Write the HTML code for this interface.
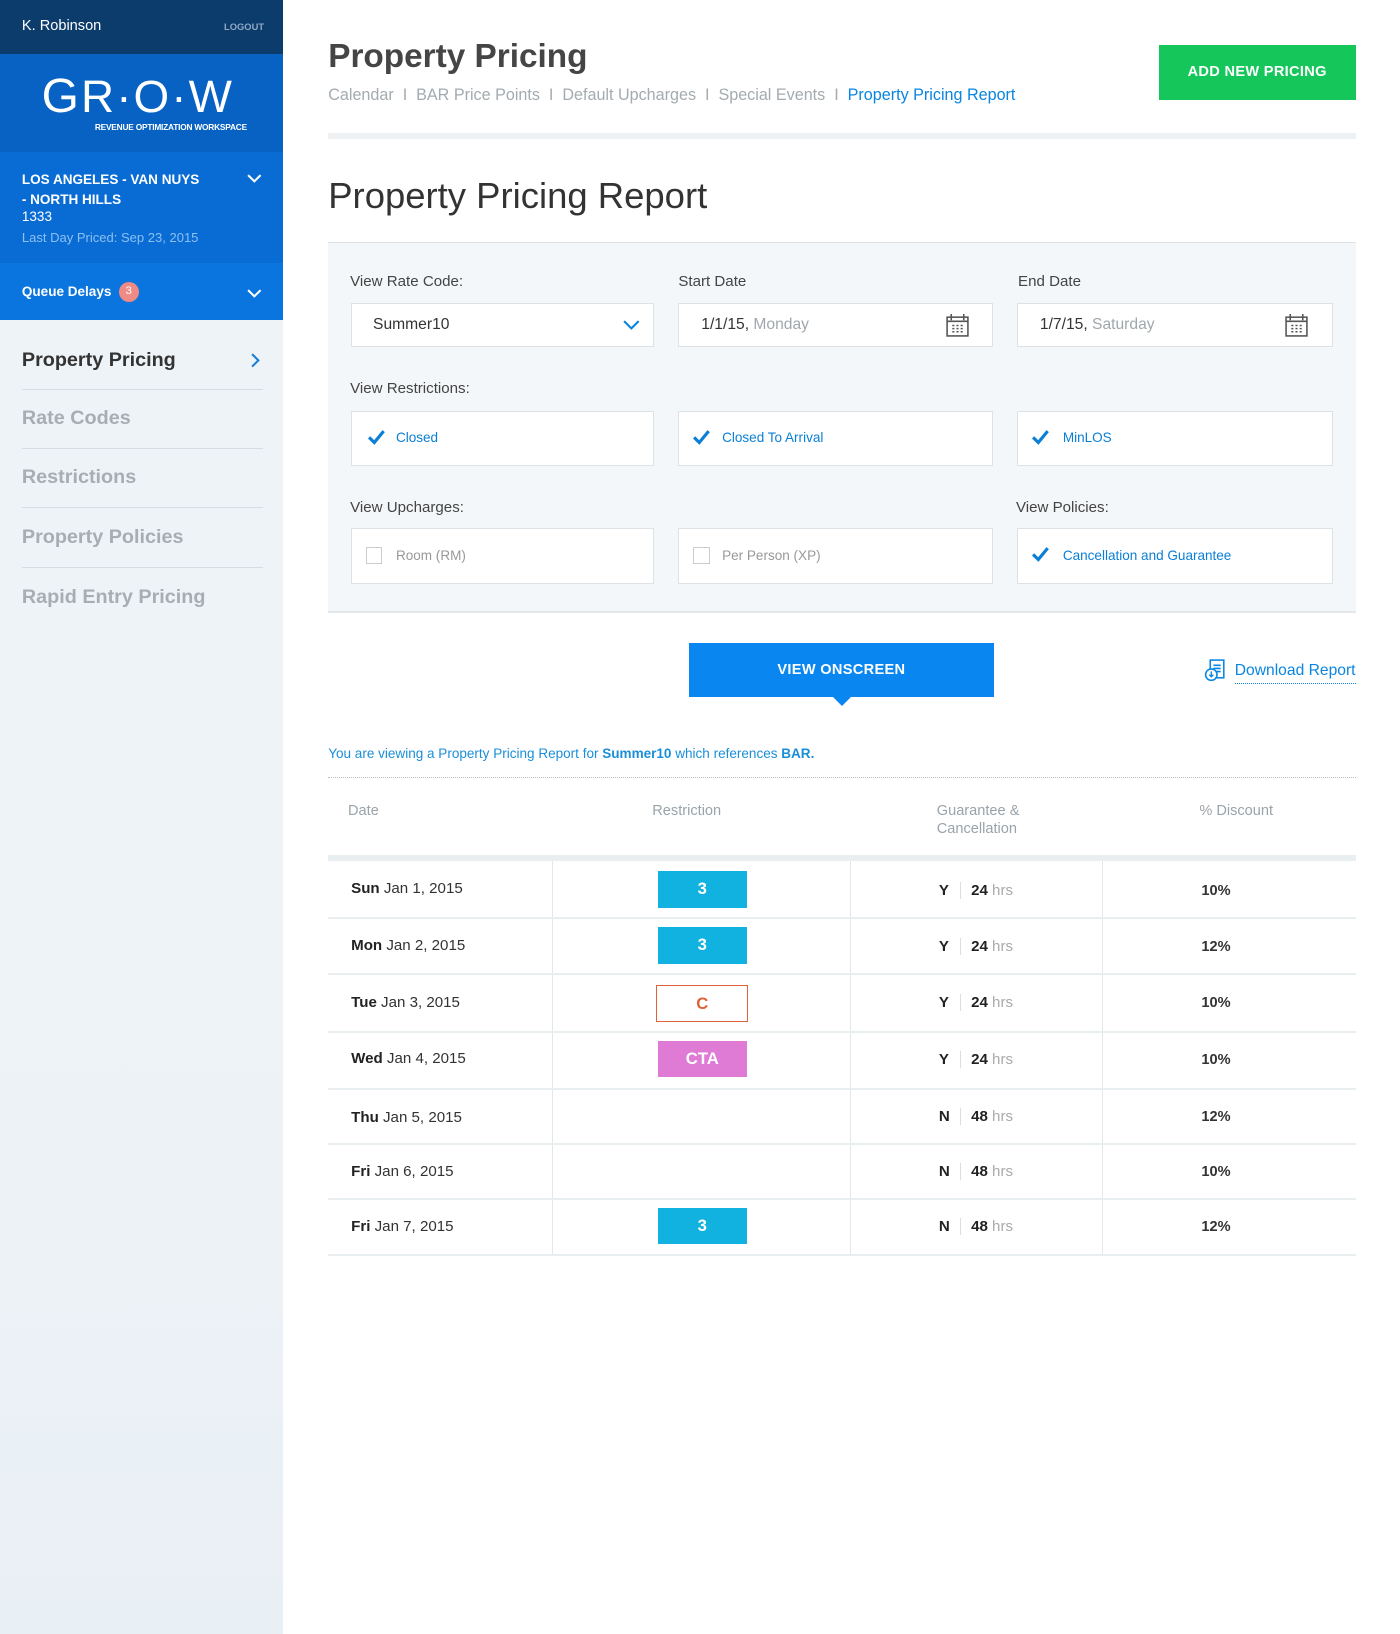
<!DOCTYPE html>
<html><head><meta charset="utf-8">
<style>
html,body{margin:0;padding:0;background:#fff;overflow:hidden}
body{width:1400px;height:1634px}
#w{zoom:1.042;position:relative;width:1344px;height:1568px;font-family:"Liberation Sans",sans-serif;color:#333}
.a{position:absolute;white-space:nowrap}
#sb{position:absolute;left:0;top:0;width:272px;height:1568px;background:linear-gradient(#eef3f7,#eef3f7 60%,#e9f0f5)}
.nav{position:absolute;left:21px;font-size:19px;font-weight:bold;color:#a6adb3}
.sep{position:absolute;left:21px;width:231px;height:1px;background:#d6dde2}
.lbl{position:absolute;font-size:14.5px;color:#444}
.box{position:absolute;background:#fff;border:1px solid #dde2e6;box-sizing:border-box}
.chk{position:absolute;font-size:13px;color:#0a7fd6}
.th{position:absolute;font-size:14px;color:#9aa3a9;top:771px}
.row{position:absolute;left:315px;width:986px;height:2px;background:#e9eef1}
.vl{position:absolute;width:1px;background:#e2e7ea;top:826px;height:378px}
.d{position:absolute;left:337px;font-size:14.5px;color:#333}
.d b{color:#222}
.bd{position:absolute;left:631px;width:86px;height:35px;line-height:35px;text-align:center;color:#fff;font-weight:bold;font-size:16px}
.g{position:absolute;left:901px;font-size:14.5px;color:#222}
.g b{display:inline-block;width:20px}
.g i{font-style:normal;display:inline-block;border-left:1px solid #ddd;padding-left:10px;font-weight:bold}
.g span{color:#aaa;font-weight:normal}
.p{position:absolute;left:1153px;font-size:14px;font-weight:bold;color:#333}
</style></head><body><div id="w">
<div id="sb">
 <div style="position:absolute;left:0;top:0;width:272px;height:52px;background:#0c3c6c"></div>
 <div class="a" style="left:21px;top:17px;font-size:14px;color:#fff">K. Robinson</div>
 <div class="a" style="left:215px;top:21px;font-size:9px;color:#8fa9c6;font-weight:bold">LOGOUT</div>
 <div style="position:absolute;left:0;top:52px;width:272px;height:94px;background:#0762c4"></div>
 <div class="a" style="left:40px;top:66px;font-size:46px;color:#fff;letter-spacing:2px">G<span style="font-size:44px">R·O·W</span></div>
 <div class="a" style="left:91px;top:117px;font-size:8px;color:#fff;font-weight:bold;letter-spacing:-.2px">REVENUE OPTIMIZATION WORKSPACE</div>
 <div style="position:absolute;left:0;top:146px;width:272px;height:106px;background:#096cd4"></div>
 <div class="a" style="left:21px;top:163px;font-size:13px;color:#fff;font-weight:bold;line-height:19px">LOS ANGELES - VAN NUYS<br>- NORTH HILLS</div>
 <div class="a" style="left:21px;top:201px;font-size:13px;color:#fff">1333</div>
 <div class="a" style="left:21px;top:221px;font-size:12.5px;color:#8cc0f2">Last Day Priced: Sep 23, 2015</div>
 <svg class="a" style="left:236px;top:166px" width="16" height="10"><path d="M2 2l6 6 6-6" stroke="#fff" stroke-width="2" fill="none"/></svg>
 <div style="position:absolute;left:0;top:252px;width:272px;height:55px;background:#0a74df"></div>
 <div class="a" style="left:21px;top:273px;font-size:13px;color:#fff;font-weight:bold">Queue Delays</div>
 <div class="a" style="left:114px;top:271px;width:19px;height:19px;border-radius:10px;background:#f08a84;color:#fff;font-size:11px;text-align:center;line-height:19px">3</div>
 <svg class="a" style="left:236px;top:276px" width="16" height="10"><path d="M2 2l6 6 6-6" stroke="#fff" stroke-width="2" fill="none"/></svg>
 <div class="nav" style="top:335px;color:#333">Property Pricing</div>
 <svg class="a" style="left:240px;top:338px" width="10" height="16"><path d="M2 2l6 6-6 6" stroke="#1a7fd6" stroke-width="2" fill="none"/></svg>
 <div class="sep" style="top:373px"></div>
 <div class="nav" style="top:391px">Rate Codes</div>
 <div class="sep" style="top:430px"></div>
 <div class="nav" style="top:447px">Restrictions</div>
 <div class="sep" style="top:487px"></div>
 <div class="nav" style="top:505px">Property Policies</div>
 <div class="sep" style="top:544px"></div>
 <div class="nav" style="top:562px">Rapid Entry Pricing</div>
</div>

<div class="a" style="left:315px;top:36px;font-size:32px;font-weight:bold;color:#454545">Property Pricing</div>
<div class="a" style="left:315px;top:83px;font-size:15.5px;color:#a3abb0">Calendar &nbsp;I&nbsp; BAR Price Points &nbsp;I&nbsp; Default Upcharges &nbsp;I&nbsp; Special Events &nbsp;I&nbsp; <span style="color:#0a86e0">Property Pricing Report</span></div>
<div class="a" style="left:1112px;top:43px;width:189px;height:53px;background:#15c75a;color:#fff;font-weight:bold;font-size:14px;text-align:center;line-height:53px;letter-spacing:.3px">ADD NEW PRICING</div>
<div class="a" style="left:315px;top:128px;width:986px;height:5px;background:#eef1f3"></div>
<div class="a" style="left:315px;top:168px;font-size:35px;color:#333">Property Pricing Report</div>

<div class="a" style="left:315px;top:232px;width:986px;height:356px;background:#f4f7f9;border-top:1px solid #dde2e6;border-bottom:2px solid #e3e8eb;box-sizing:border-box"></div>
<div class="lbl" style="left:336px;top:262px">View Rate Code:</div>
<div class="lbl" style="left:651px;top:262px">Start Date</div>
<div class="lbl" style="left:977px;top:262px">End Date</div>
<div class="box" style="left:337px;top:291px;width:291px;height:42px"></div>
<div class="a" style="left:358px;top:303px;font-size:15px;color:#333">Summer10</div>
<svg class="a" style="left:597px;top:306px" width="18" height="12"><path d="M2 2l7 7 7-7" stroke="#0a86e0" stroke-width="2" fill="none"/></svg>
<div class="box" style="left:651px;top:291px;width:302px;height:42px"></div>
<div class="a" style="left:673px;top:303px;font-size:15px;color:#333">1/1/15, <span style="color:#a0a7ac">Monday</span></div>
<div class="box" style="left:976px;top:291px;width:303px;height:42px"></div>
<div class="a" style="left:998px;top:303px;font-size:15px;color:#333">1/7/15, <span style="color:#a0a7ac">Saturday</span></div>
<svg class="a" style="left:907px;top:300px" width="24" height="24"><rect x="2" y="4" width="20" height="18" fill="none" stroke="#555" stroke-width="1.5"/><path d="M6 1v6M18 1v6M2 8h20" stroke="#555" stroke-width="1.5"/><path d="M7 12h2M11 12h2M15 12h2M7 15h2M11 15h2M15 15h2M7 18h2M11 18h2M15 18h2" stroke="#555" stroke-width="1.5"/></svg>
<svg class="a" style="left:1232px;top:300px" width="24" height="24"><rect x="2" y="4" width="20" height="18" fill="none" stroke="#555" stroke-width="1.5"/><path d="M6 1v6M18 1v6M2 8h20" stroke="#555" stroke-width="1.5"/><path d="M7 12h2M11 12h2M15 12h2M7 15h2M11 15h2M15 15h2M7 18h2M11 18h2M15 18h2" stroke="#555" stroke-width="1.5"/></svg>

<div class="lbl" style="left:336px;top:365px">View Restrictions:</div>
<div class="box" style="left:337px;top:394px;width:291px;height:53px"></div>
<div class="box" style="left:651px;top:394px;width:302px;height:53px"></div>
<div class="box" style="left:976px;top:394px;width:303px;height:53px"></div>
<svg class="a" style="left:352px;top:412px" width="18" height="16"><path d="M2 8l5 5 9-11" stroke="#0a7fd6" stroke-width="3" fill="none"/></svg>
<div class="chk" style="left:380px;top:413px">Closed</div>
<svg class="a" style="left:664px;top:412px" width="18" height="16"><path d="M2 8l5 5 9-11" stroke="#0a7fd6" stroke-width="3" fill="none"/></svg>
<div class="chk" style="left:693px;top:413px">Closed To Arrival</div>
<svg class="a" style="left:989px;top:412px" width="18" height="16"><path d="M2 8l5 5 9-11" stroke="#0a7fd6" stroke-width="3" fill="none"/></svg>
<div class="chk" style="left:1020px;top:413px">MinLOS</div>

<div class="lbl" style="left:336px;top:479px">View Upcharges:</div>
<div class="lbl" style="left:975px;top:479px">View Policies:</div>
<div class="box" style="left:337px;top:507px;width:291px;height:53px"></div>
<div class="box" style="left:651px;top:507px;width:302px;height:53px"></div>
<div class="box" style="left:976px;top:507px;width:303px;height:53px"></div>
<div class="a" style="left:351px;top:525px;width:14px;height:14px;border:1px solid #ccc;background:#fff"></div>
<div class="chk" style="left:380px;top:526px;color:#999">Room (RM)</div>
<div class="a" style="left:665px;top:525px;width:14px;height:14px;border:1px solid #ccc;background:#fff"></div>
<div class="chk" style="left:693px;top:526px;color:#999">Per Person (XP)</div>
<svg class="a" style="left:989px;top:524px" width="18" height="16"><path d="M2 8l5 5 9-11" stroke="#0a7fd6" stroke-width="3" fill="none"/></svg>
<div class="chk" style="left:1020px;top:526px">Cancellation and Guarantee</div>

<div class="a" style="left:661px;top:617px;width:293px;height:52px;background:#0a86f0;color:#fff;font-weight:bold;font-size:14px;text-align:center;line-height:52px;letter-spacing:.3px">VIEW ONSCREEN</div>
<div class="a" style="left:799px;top:669px;width:0;height:0;border-left:9px solid transparent;border-right:9px solid transparent;border-top:9px solid #0a86f0"></div>
<svg class="a" style="left:1155px;top:631px" width="22" height="24"><rect x="6" y="2" width="13" height="17" fill="#fff" stroke="#0a86e0" stroke-width="1.5"/><path d="M9 7h7M9 10h7M9 13h7" stroke="#0a86e0" stroke-width="1.5"/><circle cx="7" cy="16" r="5.5" fill="#fff" stroke="#0a86e0" stroke-width="1.5"/><path d="M7 13v5M5 16l2 2 2-2" stroke="#0a86e0" stroke-width="1.3" fill="none"/></svg>
<div class="a" style="left:1185px;top:635px;font-size:15px;color:#0a86e0;border-bottom:1px dotted #0a86e0;padding-bottom:3px">Download Report</div>

<div class="a" style="left:315px;top:716px;font-size:13px;color:#1a8fd9">You are viewing a Property Pricing Report for <b>Summer10</b> which references <b>BAR.</b></div>
<div class="a" style="left:315px;top:746px;width:986px;border-top:1px dotted #b8c0c5"></div>

<div class="th" style="left:334px">Date</div>
<div class="th" style="left:626px">Restriction</div>
<div class="th" style="left:899px;line-height:17px">Guarantee &amp;<br>Cancellation</div>
<div class="th" style="left:1151px">% Discount</div>
<div class="a" style="left:315px;top:821px;width:986px;height:5px;background:#e9eef1"></div>
<div class="vl" style="left:530px"></div><div class="vl" style="left:816px"></div><div class="vl" style="left:1058px"></div>
<div class="row" style="top:880px"></div><div class="row" style="top:934px"></div><div class="row" style="top:989px"></div><div class="row" style="top:1044px"></div><div class="row" style="top:1097px"></div><div class="row" style="top:1150px"></div><div class="row" style="top:1203px"></div>

<div class="d" style="top:845px"><b>Sun</b> Jan 1, 2015</div>
<div class="d" style="top:899px"><b>Mon</b> Jan 2, 2015</div>
<div class="d" style="top:954px"><b>Tue</b> Jan 3, 2015</div>
<div class="d" style="top:1008px"><b>Wed</b> Jan 4, 2015</div>
<div class="d" style="top:1064px"><b>Thu</b> Jan 5, 2015</div>
<div class="d" style="top:1116px"><b>Fri</b> Jan 6, 2015</div>
<div class="d" style="top:1169px"><b>Fri</b> Jan 7, 2015</div>

<div class="bd" style="top:836px;background:#12b2e0">3</div>
<div class="bd" style="top:890px;background:#12b2e0">3</div>
<div class="bd" style="top:945px;left:630px;width:86px;height:34px;line-height:34px;border:1.5px solid #e0623a;color:#e0623a;background:#fff">C</div>
<div class="bd" style="top:999px;background:#e07bd5">CTA</div>
<div class="bd" style="top:1159px;background:#12b2e0">3</div>

<div class="g" style="top:846px"><b>Y</b><i>24 <span>hrs</span></i></div>
<div class="g" style="top:900px"><b>Y</b><i>24 <span>hrs</span></i></div>
<div class="g" style="top:954px"><b>Y</b><i>24 <span>hrs</span></i></div>
<div class="g" style="top:1009px"><b>Y</b><i>24 <span>hrs</span></i></div>
<div class="g" style="top:1063px"><b>N</b><i>48 <span>hrs</span></i></div>
<div class="g" style="top:1116px"><b>N</b><i>48 <span>hrs</span></i></div>
<div class="g" style="top:1169px"><b>N</b><i>48 <span>hrs</span></i></div>

<div class="p" style="top:847px">10%</div>
<div class="p" style="top:901px">12%</div>
<div class="p" style="top:955px">10%</div>
<div class="p" style="top:1010px">10%</div>
<div class="p" style="top:1064px">12%</div>
<div class="p" style="top:1117px">10%</div>
<div class="p" style="top:1170px">12%</div>
</div></body></html>
